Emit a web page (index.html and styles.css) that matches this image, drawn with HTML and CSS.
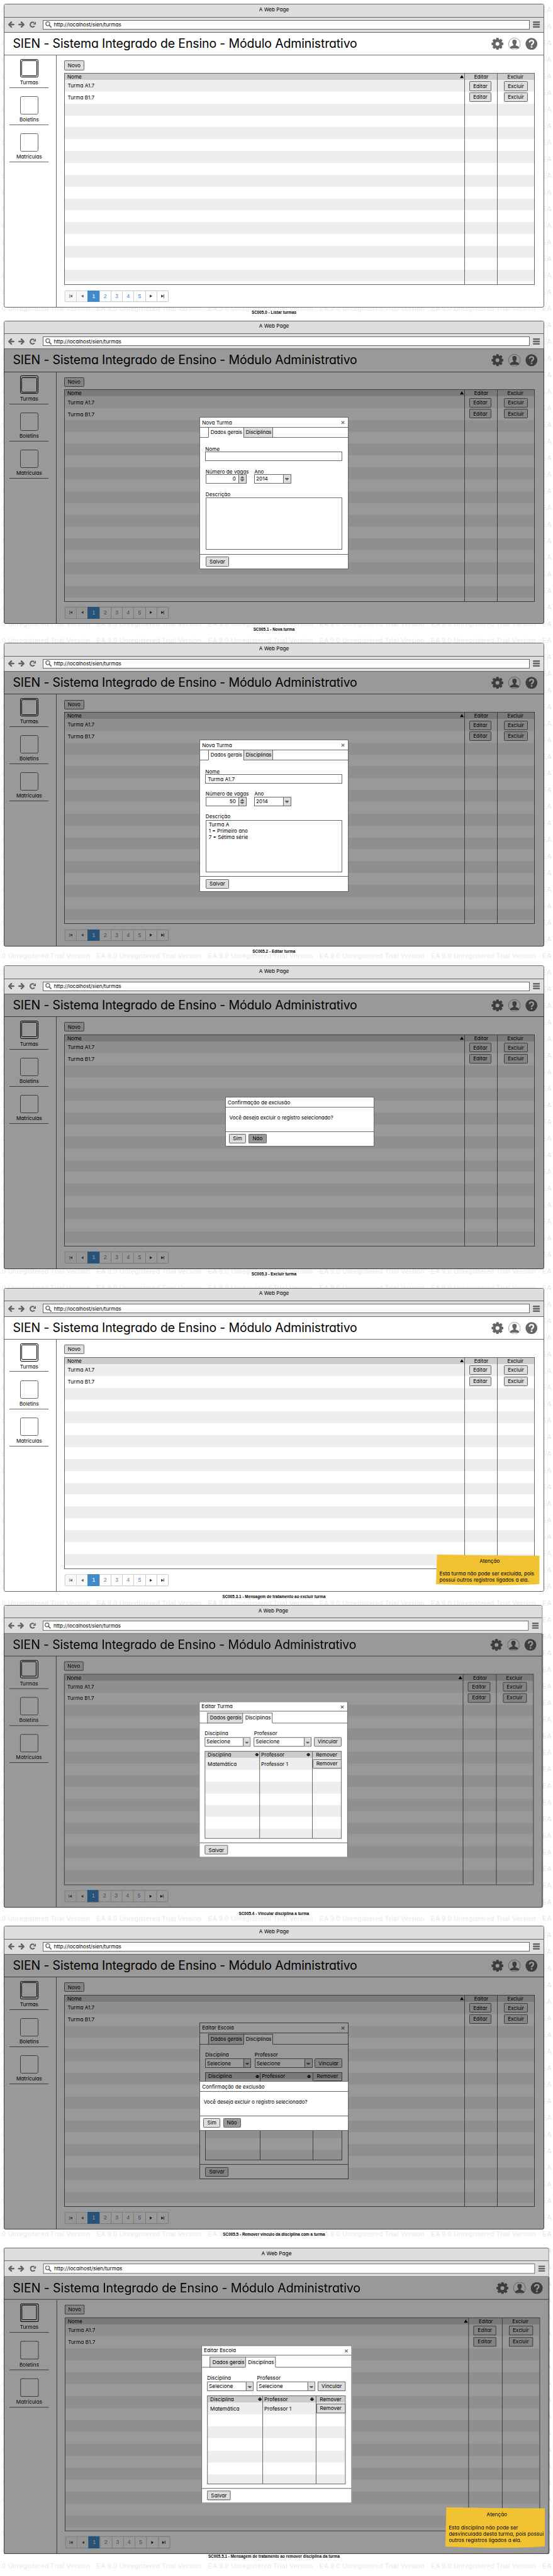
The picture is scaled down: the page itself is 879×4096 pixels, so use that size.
FILE: index.html
```html
<!DOCTYPE html>
<html lang="pt-BR">
<head>
<meta charset="utf-8">
<title>SIEN - Turmas</title>
<link rel="stylesheet" href="styles.css">
</head>
<body>
<svg class="defs" aria-hidden="true">
  <symbol id="i-back" viewBox="0 0 16 16"><path d="M8 2 2 8l6 6M3 8h11" fill="none" stroke="#666" stroke-width="4" stroke-linecap="round" stroke-linejoin="round"/></symbol>
  <symbol id="i-fwd" viewBox="0 0 16 16"><path d="M8 2l6 6-6 6M13 8H2" fill="none" stroke="#666" stroke-width="4" stroke-linecap="round" stroke-linejoin="round"/></symbol>
  <symbol id="i-reload" viewBox="0 0 16 16"><path d="M12.6 11.6A6 6 0 1 1 11.5 3.4" fill="none" stroke="#666" stroke-width="3.4"/><path d="M16 .5V8H8.5z" fill="#666"/></symbol>
  <symbol id="i-search" viewBox="0 0 16 16"><circle cx="6.2" cy="6" r="4.9" fill="none" stroke="#666" stroke-width="2"/><path d="M9.8 9.8l5 4.6" stroke="#666" stroke-width="2.8" stroke-linecap="round"/></symbol>
  <symbol id="i-menu" viewBox="0 0 18 16"><path d="M2 2h14M2 8h14M2 14h14" stroke="#666" stroke-width="4" stroke-linecap="round"/></symbol>
  <symbol id="i-gear" viewBox="0 0 32 32"><g fill="#666"><path d="M13 0.5h6l1.2 6h-8.4zM13 31.5h6l1.2-6h-8.4zM.5 13v6l6 1.2v-8.4zM31.5 13v6l-6 1.2v-8.4z"/><path transform="rotate(45 16 16)" d="M13 0.5h6l1.2 6h-8.4zM13 31.5h6l1.2-6h-8.4zM.5 13v6l6 1.2v-8.4zM31.5 13v6l-6 1.2v-8.4z"/></g><circle cx="16" cy="16" r="8.5" fill="none" stroke="#666" stroke-width="7"/></symbol>
  <symbol id="i-user" viewBox="0 0 32 32"><circle cx="16" cy="16" r="15.4" fill="none" stroke="#666"/><path d="M16 5c4 0 6.300 2.500 5.800 6.500 0 3-1.500 5-2.700 6.500 0 2 1 2.500 4 3.500 3.500 1 4.900 3 4.900 6.500H4.500c0-3.500 1.400-5.500 4.900-6.500 3-1 4-1.500 4-3.500-1.200-1.500-2.900-3.500-3-6.500C10.200 7.500 12 5 16 5z" fill="#666"/></symbol>
  <symbol id="i-help" viewBox="0 0 32 32"><circle cx="16" cy="16" r="15.500" fill="#666"/><path d="M11 12.500c0-7 10.500-7 10.500-.8 0 4.300-5.300 4.300-5.300 8.600" fill="none" stroke="#fff" stroke-width="3.800"/><rect x="14.200" y="22.300" width="4.200" height="3.800" fill="#fff"/></symbol>
  <symbol id="i-close" viewBox="0 0 10 10"><path d="M1 1l8 8M9 1L1 9" stroke="#666" stroke-width="2.200"/></symbol>
  <symbol id="i-down" viewBox="0 0 10 6"><path d="M0 0h10v1L5.800 6H4.200L0 1z" fill="#666"/></symbol>
  <symbol id="i-spin" viewBox="0 0 10 14"><path d="M5 0l5 5v1H0V5zM5 14l5-5V8H0v1z" fill="#666"/></symbol>
  <symbol id="i-sort" viewBox="0 0 10 10"><path d="M5 0l5 3.600v1H0v-1zM5 10l5-3.600v-1H0v1z"/></symbol>
  <symbol id="i-asc" viewBox="0 0 10 8"><path d="M5 0l5 8H0z"/></symbol>
  <symbol id="i-note" viewBox="0 0 262 78" preserveAspectRatio="none"><path d="M2.500 0 Q130 2.500 262 2.500 L262 74.500 Q180 80 0 75 Z" fill="#f1c232"/></symbol>
</svg>
<main class="board" id="board">
  <svg class="watermark" aria-hidden="true">
    <pattern id="wm" x="-37.700" y="15" width="281.900" height="42" patternUnits="userSpaceOnUse">
      <text x="0" y="15.700" textLength="265" fill="#e4e4e4">EA 9.0 Unregistered Trial Version</text>
    </pattern>
    <rect width="100%" height="100%" fill="url(#wm)"/>
  </svg>
</main>
<script src="app.js"></script>
</body>
</html>
```

FILE: styles.css
```css
*, *::before, *::after { box-sizing: border-box; }
body { margin: 0; background: #fff; overflow: hidden; }
.defs { position: absolute; width: 0; height: 0; }
svg { display: block; flex: none; }

.board {
  --line: #666;
  --sans: "Liberation Sans", Arial, sans-serif;
  position: relative;
  zoom: 0.6284;
  width: 1399px;
  height: 6518px;
  padding: 10px 0 0 10px;
  overflow: hidden;
  font: 13px/16px Inter, "Noto Sans", sans-serif;
  font-feature-settings: "cv11";
  color: #000;
}
.watermark { position: absolute; left: 0; top: 0; width: 1399px; height: 6518px; font: 16.500px var(--sans); font-feature-settings: normal; }

.shot { position: relative; width: 1366px; }
.caption {
  margin-top: 7px;
  text-align: center;
  font: bold 10px/12px var(--sans);
  letter-spacing: .1px;
}

/* Browser window */
.frame {
  position: relative;
  display: flex;
  flex-direction: column;
  height: 768px;
  border: 2px solid var(--line);
  border-radius: 5px;
  background: #fff;
  transform-origin: 0 0;
}
.frame--small { transform: scale(.998, .9965); }
.frame--large { transform: scale(1.01, 1.0085); }
.titlebar { height: 31px; padding-top: 4px; text-align: center; background: #ddd; border-radius: 3px 3px 0 0; }
.toolbar {
  display: flex;
  align-items: center;
  height: 40px;
  padding: 0 8px 0 9px;
  background: #ddd;
  border-top: 1px solid var(--line);
  border-bottom: 1px solid var(--line);
}
.toolbar .i { width: 16px; height: 16px; }
.toolbar .fwd { margin: 0 14px 0 9px; }
.url {
  flex: 1;
  display: flex;
  align-items: center;
  gap: 6px;
  height: 24px;
  margin: 0 8px 0 17px;
  padding-left: 4px;
  background: #fff;
  border: 1px solid var(--line);
}
.toolbar .menu { width: 18px; }
.header {
  display: flex;
  align-items: center;
  height: 58px;
  padding: 0 14px 0 21px;
  gap: 12px;
  border-bottom: 1px solid var(--line);
}
.header h1 { flex: 1; margin: 0; font-weight: 400; font-size: 31px; line-height: 40px; letter-spacing: -.2px; white-space: nowrap; }
.header .i { width: 31px; height: 31px; }
.content { flex: 1; display: flex; }

/* Side navigation */
.side { width: 132px; padding: 9px 19px 0 13px; border-right: 1px solid var(--line); }
.nav { height: 73px; margin-bottom: 21px; border-bottom: 1px solid var(--line); text-align: center; }
.nav i { display: block; width: 46px; height: 46px; margin: 0 auto 5px; border: 2px solid var(--line); border-radius: 4px; }
.nav--on i { border-color: #000; padding: 2px; }
.nav--on i::after { content: ""; display: block; width: 100%; height: 100%; border: 1.500px solid #000; border-radius: 3px; }

/* Main area */
.area { flex: 1; padding: 13px 21px 0 19px; }
.btn {
  display: flex;
  align-items: center;
  justify-content: center;
  height: 24px;
  padding-bottom: 1px;
  background: #ddd;
  border: 1px solid var(--line);
  border-radius: 2px;
}
.btn--new { width: 50px; margin-bottom: 7px; }
.btn--no { background: #999; }
.grid {
  display: flex;
  height: 537px;
  border: 1px solid var(--line);
  background: linear-gradient(#ccc, #ccc) 0 0 / 100% 16px no-repeat,
    repeating-linear-gradient(#eee 0 30px, #fff 30px 60px) 0 16px;
}
.col + .col { border-left: 1px solid var(--line); }
.head { display: flex; align-items: center; justify-content: space-between; height: 16px; padding-left: 6px; margin-bottom: 4px; }
.col--name { flex: 1; }
.col--name .head { padding-right: 1px; margin: 0; }
.row { height: 30px; padding: 7px 0 0 7px; }
.head .i { width: 10px; height: 9px; }
.col--edit { width: 84px; padding-left: 11px; }
.col--edit .head { padding-left: 13px; }
.col--edit .btn { width: 57px; margin-bottom: 4px; }
.col--del { width: 94px; padding-left: 15px; }
.col--del .head { padding-left: 9px; }
.col--del .btn { width: 61px; margin-bottom: 4px; }

.pager {
  display: flex;
  width: 265px;
  height: 32px;
  margin-top: 12px;
  padding: 1px;
  background: #f5f5f5;
  font: 14px/28px var(--sans);
  font-feature-settings: normal;
  color: #428bca;
}
.pager span { flex: 1; display: grid; place-items: center; background: #fff; border: 1px solid #ccc; border-right: 0; }
.pager span:first-child { border-radius: 4px 0 0 4px; }
.pager span:last-child { border-right: 1px solid #ccc; border-radius: 0 4px 4px 0; }
.pager .off { background: #fafafa; opacity: .75; }
.pager .on { background: #428bca; border-color: #428bca; color: #fff; }
.pager svg { width: 9px; height: 9px; }

.dim { position: absolute; left: -2px; right: -2px; top: 71px; bottom: -2px; background: rgba(0, 0, 0, .4); border-radius: 0 0 5px 5px; }

/* Dialogs */
.modal { position: absolute; left: 493px; top: 243px; width: 377px; background: #fff; border: 1px solid var(--line); }
.modal__title { display: flex; align-items: center; justify-content: space-between; height: 25px; padding: 1px 7px 0 5px; border-bottom: 1px solid var(--line); }
.modal__title .i { width: 10px; height: 9px; }
.tabs { display: flex; height: 26px; line-height: 24px; letter-spacing: -.15px; white-space: nowrap; }
.tabs > * { flex: none; border-bottom: 1px solid var(--line); }
.tabs .lead { width: 20px; }
.tabs .fill { flex: 1; }
.tab { padding-left: 5px; border-left: 1px solid var(--line); background: #ddd; }
.tabs .tab--on { background: #fff; border-bottom-color: transparent; }
.tab--data { width: 89px; }
.tab--subj { width: 76px; border-right: 1px solid var(--line); }
.form { height: 295px; padding: 19px 14px 0 13px; border-bottom: 1px solid var(--line); }
.field label { display: block; height: 16px; padding-top: 1px; white-space: nowrap; }
.input { height: 24px; padding: 3px 0 0 5px; border: 1px solid var(--line); background: #fff; white-space: nowrap; }
.pair { display: flex; gap: 20px; margin: 17px 0 17px 1px; }
.pair .field:first-child { width: 103px; }
.spin, .select { display: flex; height: 24px; border: 1px solid var(--line); border-radius: 1px; background: #fff; }
.spin b, .select b { flex: 1; font-weight: 400; padding: 2px 0 0 3px; }
.spin b { text-align: right; padding-right: 7px; }
.spin u, .select u { width: 18px; display: grid; place-items: center; border-left: 1px solid var(--line); background: #ddd; }
.select { width: 93px; }
.spin .i { width: 10px; height: 14px; }
.select .i { width: 10px; height: 6px; margin-top: 2px; }
.desc { margin-left: 1px; }
.textarea { height: 132px; margin: 2px 1px 0 0; padding: 2px 6px; border: 1px solid var(--line); }
.foot { display: flex; gap: 7px; }
.foot--save { height: 36px; padding: 6px 0 0 14px; }
.foot--save .btn { width: 59px; }

.modal--subj .tabs { height: 29px; padding-top: 3px; }
.modal--subj .tab { border-top: 1px solid var(--line); line-height: 23px; }
.modal--subj .form { height: 304px; padding-top: 17px; border-bottom-width: 2px; }
.modal--subj .foot--save { padding-left: 13px; }
.link { display: flex; align-items: flex-end; margin-bottom: 11px; }
.link .field label { height: 19px; }
.link .f1 .select { width: 116px; }
.link .f2 { margin: 0 6px 0 9px; }
.link .f2 .select { width: 146px; }
.link .btn { width: 70px; }
.grid--subj { height: 222px; width: 347px; }
.grid--subj .col { flex: none; }
.grid--subj .c1 { width: 137px; }
.grid--subj .c2 { width: 133px; }
.grid--subj .c3 { width: 76px; }
.grid--subj .head { margin: 0; }
.grid--subj .c1 .head { padding-right: 1px; }
.grid--subj .c1 .row { padding-left: 6px; }
.grid--subj .c2 .head, .grid--subj .c2 .row { padding-left: 3px; }
.grid--subj .c2 .head { padding-right: 4px; }
.grid--subj .c3 .head { padding-left: 9px; }
.grid--subj .c3 .btn { margin: 2px 1px 0 0; }

.modal--confirm { height: 125px; }
.ask { height: 62px; padding: 18px 0 0 9px; border-bottom: 1px solid var(--line); letter-spacing: -.1px; }
.foot--ask { padding: 5px 0 0 8px; }
.foot--ask .btn { width: 43px; }
.foot--ask .btn--no { width: 45px; }

/* Sticky note */
.note { position: absolute; left: 1092px; top: 674px; width: 262px; height: 78px; padding: 9px 0 0 8px; line-height: 15px; white-space: pre-line; }
.note--tall { left: 1105px; top: 650px; width: 249px; height: 103px; line-height: 16px; }
.note > svg { position: absolute; inset: 0; width: 100%; height: 100%; }
.note h2 { position: relative; margin: 0 0 17px; font: inherit; text-align: center; }
.note p { position: relative; margin: 0; }
```

FILE: app.js
```javascript
const icon = (name, cls = '') => `<svg class="i ${cls}"><use href="#i-${name}"/></svg>`;
const btn = (label, cls = '') => `<div class="btn ${cls}">${label}</div>`;

const arrow = (d) => `<svg viewBox="0 0 9 9"><path d="${d}" fill="#222" stroke="#222" stroke-width=".3"/></svg>`;
const pager = `<div class="pager">
  <span class="off">${arrow('M1 0h1v9H1zM8.500 1v7L3 4.500z')}</span><span class="off">${arrow('M7.500 1v7L2 4.500z')}</span>
  <span class="on">1</span><span>2</span><span>3</span><span>4</span><span>5</span>
  <span>${arrow('M2 1v7l5.500-3.500z')}</span><span>${arrow('M7 0h1v9H7zM.5 1v7L6 4.500z')}</span></div>`;

const page = `
  <div class="titlebar">A Web Page</div>
  <div class="toolbar">${icon('back')}${icon('fwd', 'fwd')}${icon('reload')}
    <div class="url">${icon('search')}<span>http://localhost/sien/turmas</span></div>${icon('menu', 'menu')}</div>
  <div class="header"><h1>SIEN - Sistema Integrado de Ensino - Módulo Administrativo</h1>
    ${icon('gear')}${icon('user')}${icon('help')}</div>
  <div class="content">
    <div class="side">
      <div class="nav nav--on"><i></i>Turmas</div><div class="nav"><i></i>Boletins</div><div class="nav"><i></i>Matrículas</div>
    </div>
    <div class="area">${btn('Novo', 'btn--new')}
      <div class="grid">
        <div class="col col--name"><div class="head">Nome${icon('asc')}</div><div class="row">Turma A1.7</div><div class="row">Turma B1.7</div></div>
        <div class="col col--edit"><div class="head">Editar</div>${btn('Editar')}${btn('Editar')}</div>
        <div class="col col--del"><div class="head">Excluir</div>${btn('Excluir')}${btn('Excluir')}</div>
      </div>${pager}
    </div>
  </div>`;

const title = (text) => `<div class="modal__title">${text}${icon('close')}</div>`;
const select = (text) => `<div class="select"><b>${text}</b><u>${icon('down')}</u></div>`;

const formModal = (name, seats, text) => `<div class="modal">${title('Nova Turma')}
  <div class="tabs"><div class="lead"></div><div class="tab tab--data tab--on">Dados gerais</div><div class="tab tab--subj">Disciplinas</div><div class="fill"></div></div>
  <div class="form">
    <div class="field"><label>Nome</label><div class="input">${name}</div></div>
    <div class="pair">
      <div class="field"><label>Número de vagas</label><div class="spin"><b>${seats}</b><u>${icon('spin')}</u></div></div>
      <div class="field"><label>Ano</label>${select('2014')}</div>
    </div>
    <div class="field desc"><label>Descrição</label><div class="textarea">${text}</div></div>
  </div>
  <div class="foot foot--save">${btn('Salvar')}</div></div>`;

const subjectModal = (name) => `<div class="modal modal--subj">${title(name)}
  <div class="tabs"><div class="lead"></div><div class="tab tab--data">Dados gerais</div><div class="tab tab--subj tab--on">Disciplinas</div><div class="fill"></div></div>
  <div class="form">
    <div class="link"><div class="field f1"><label>Disciplina</label>${select('Selecione')}</div>
      <div class="field f2"><label>Professor</label>${select('Selecione')}</div>${btn('Vincular')}</div>
    <div class="grid grid--subj">
      <div class="col c1"><div class="head">Disciplina${icon('sort')}</div><div class="row">Matemática</div></div>
      <div class="col c2"><div class="head">Professor${icon('sort')}</div><div class="row">Professor 1</div></div>
      <div class="col c3"><div class="head">Remover</div>${btn('Remover')}</div>
    </div>
  </div>
  <div class="foot foot--save">${btn('Salvar')}</div></div>`;

const confirmModal = (x, y) => `<div class="modal modal--confirm" style="left:${x}px;top:${y}px">
  <div class="modal__title">Confirmação de exclusão</div><div class="ask">Você deseja excluir o registro selecionado?</div>
  <div class="foot foot--ask">${btn('Sim')}${btn('Não', 'btn--no')}</div></div>`;

const note = (text, cls = '') => `<div class="note ${cls}">${icon('note')}<h2>Atenção</h2><p>${text}</p></div>`;
const dim = '<div class="dim"></div>';

const shots = [
  { height: 801, caption: 'SC005.0 - Listar turmas', over: '' },
  { height: 816, caption: 'SC005.1 - Nova turma', over: dim + formModal('', '0', '') },
  { height: 816, caption: 'SC005.2 - Editar turma', over: dim + formModal('Turma A1.7', '50', 'Turma A<br>1 = Primeiro ano<br>7 = Sétima série') },
  { height: 816, caption: 'SC005.3 - Excluir turma', over: dim + confirmModal(558, 331) },
  { height: 802, caption: 'SC005.3.1 - Mensagem de tratamento ao excluir turma', over: note('Esta turma não pode ser excluída, pois\npossui outros registros ligados a ela.') },
  { height: 812, caption: 'SC005.4 - Vincular disciplina a turma', frame: 'frame--small', over: dim + subjectModal('Editar Turma') },
  { height: 815, caption: 'SC005.5 - Remover vínculo da disciplina com a turma', over: subjectModal('Editar Escola') + dim + confirmModal(493, 392) },
  { height: 830, caption: 'SC005.5.1 - Mensagem de tratamento ao remover disciplina da turma', frame: 'frame--large',
    over: dim + subjectModal('Editar Escola') + note('Esta disciplina não pode ser\ndesvinculada desta turma, pois possui\noutros registros ligados a ela.', 'note--tall') },
];

document.getElementById('board').insertAdjacentHTML('beforeend', shots.map((s) => `
  <section class="shot" style="height:${s.height}px">
    <div class="frame ${s.frame || ''}">${page}${s.over}</div>
    <div class="caption">${s.caption}</div>
  </section>`).join(''));
```
